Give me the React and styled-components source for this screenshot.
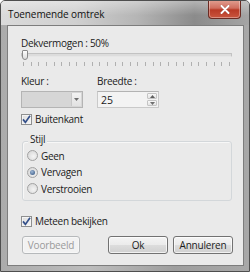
import React from 'react';
import styled, { createGlobalStyle } from 'styled-components';

const Global = createGlobalStyle`
  html, body { margin: 0; padding: 0; background: #ffffff; }
  body { font-family: "Open Sans", "Noto Sans", sans-serif; font-size: 10px; color: #1b1b1b; }
  * { box-sizing: border-box; }
`;

const Window = styled.div`
  width: 250px;
  height: 272px;
  display: flex;
  flex-direction: column;
  border: 1px solid #4e4e4e;
  border-radius: 5px 5px 0 0;
  background: linear-gradient(to right, #ababab 0%, #bdbdbd 35%, #9e9e9e 70%, #a8a8a8 100%);
  overflow: hidden;
`;

const TitleBar = styled.div`
  height: 24px;
  flex: none;
  display: flex;
  align-items: flex-start;
  padding-left: 7px;
  padding-right: 8px;
  background:
    linear-gradient(to bottom, rgba(255,255,255,0.35), rgba(255,255,255,0) 60%),
    linear-gradient(to right, #dadada 0%, #d0d0d0 30%, #b5b5b5 55%, #8b8b8b 78%, #a5a5a5 100%);
`;

const Title = styled.div`
  margin-top: 5px;
  font-size: 10px;
  line-height: 16px;
  color: #111;
  letter-spacing: -0.1px;
`;

const CloseButton = styled.div`
  margin-left: auto;
  margin-top: -1px;
  width: 33px;
  height: 19px;
  border: 1px solid #6b2a22;
  border-top: none;
  border-radius: 0 0 4px 4px;
  background: linear-gradient(to bottom, #e2a193 0%, #d06e5e 45%, #b93a26 55%, #c9553e 100%);
  box-shadow: inset 0 0 0 1px rgba(255,255,255,0.35);
  display: flex;
  align-items: center;
  justify-content: center;
`;

const Client = styled.div`
  flex: 1;
  margin: 0 5px 5px 6px;
  border: 1px solid #7d7d7d;
  background: #eaeaea;
  display: flex;
  flex-direction: column;
  padding: 0 11px 0 13px;
`;

const Label = styled.div`
  font-size: 10px;
  letter-spacing: -0.3px;
  line-height: 16px;
  margin-top: ${p => p.$mt || 0}px;
  white-space: nowrap;
`;

const Slider = styled.div`
  margin-top: -2px;
  height: 18px;
  display: flex;
  flex-direction: column;
  position: relative;
`;

const Track = styled.div`
  margin-top: 4px;
  height: 4px;
  border: 1px solid #c2c2c2;
  border-bottom-color: #e6e6e6;
  background: #dcdcdc;
  border-radius: 1px;
`;

const Thumb = styled.div`
  position: absolute;
  left: 1px;
  top: 1px;
  width: 6px;
  height: 10px;
  border: 1px solid #8a8a8a;
  border-radius: 1px 1px 3px 3px;
  background: linear-gradient(to bottom, #fdfdfd, #dcdcdc);
`;

const Ticks = styled.div`
  margin-top: 5px;
  padding: 0 2px;
  display: flex;
  justify-content: space-between;
`;

const Tick = styled.div`
  width: 1px;
  height: 4px;
  background: #b0b0b0;
`;

const FieldGrid = styled.div`
  display: grid;
  grid-template-columns: 62px 62px;
  column-gap: 14px;
  row-gap: 2px;
  margin-top: ${p => p.$mt || 0}px;
`;

const Combo = styled.div`
  height: 17px;
  border: 1px solid #b4b4b4;
  background: #d6d6d6;
  display: flex;
  justify-content: flex-end;
  padding: 1px;
`;

const ComboArrow = styled.div`
  width: 10px;
  background: linear-gradient(to bottom, #f2f2f2, #e2e2e2);
  border-left: 1px solid #c8c8c8;
  display: flex;
  align-items: center;
  justify-content: center;
`;

const Spin = styled.div`
  height: 17px;
  border: 1px solid #c9c9c9;
  border-top-color: #b3b3b3;
  background: #f3f3f3;
  display: flex;
  align-items: center;
  padding: 1px 1px 1px 3px;
`;

const SpinText = styled.div`
  flex: 1;
  font-size: 10.5px;
  line-height: 14px;
`;

const SpinButtons = styled.div`
  width: 10px;
  align-self: stretch;
  display: flex;
  flex-direction: column;
  gap: 1px;
`;

const SpinButton = styled.div`
  flex: 1;
  border: 1px solid #c4c4c4;
  border-radius: 1px;
  background: linear-gradient(to bottom, #f8f8f8, #e4e4e4);
  display: flex;
  align-items: center;
  justify-content: center;
`;

const Check = styled.div`
  display: flex;
  align-items: center;
  gap: 3px;
  height: 14px;
  margin-top: ${p => p.$mt || 0}px;
`;

const Box = styled.div`
  width: 11px;
  height: 11px;
  border: 1px solid #8e8f8f;
  background: linear-gradient(135deg, #dcdcdc, #f6f6f6);
  box-shadow: inset 0 0 0 1px #f4f4f4;
  display: flex;
  align-items: center;
  justify-content: center;
`;

const Group = styled.div`
  position: relative;
  margin: ${p => p.$mt || 0}px 0 0 1px;
  height: 60px;
  border: 1px solid #d3d7da;
  border-radius: 3px;
  box-shadow: inset 1px 1px 0 #f7f7f7;
  padding: 5.5px 0 0 4px;
  display: flex;
  flex-direction: column;
  gap: 0.5px;
`;

const Legend = styled.div`
  position: absolute;
  left: 5px;
  top: -11px;
  padding: 0 2px;
  background: #eaeaea;
  font-size: 10px;
  letter-spacing: -0.3px;
  line-height: 16px;
`;

const Radio = styled.div`
  display: flex;
  align-items: center;
  gap: 3px;
  height: 16px;
`;

const Circle = styled.div`
  width: 11px;
  height: 11px;
  border-radius: 50%;
  border: 1px solid #a2a2a2;
  background: radial-gradient(circle at 60% 60%, #f4f4f4, #d2d2d2);
  display: flex;
  align-items: center;
  justify-content: center;
`;

const Dot = styled.div`
  width: 5px;
  height: 5px;
  border-radius: 50%;
  background: radial-gradient(circle at 40% 35%, #9fb8d6, #2d4e7a);
`;

const ButtonRow = styled.div`
  display: flex;
  margin-top: ${p => p.$mt || 0}px;
  padding-left: 1px;
  margin-right: -1px;
  gap: 5px;
`;

const Button = styled.div`
  width: ${p => p.$w}px;
  height: 18px;
  margin-left: ${p => (p.$push ? 'auto' : '0')};
  border: 1px solid ${p => (p.$disabled ? '#b6b9bb' : '#727272')};
  border-radius: 3px;
  background: ${p => p.$disabled
    ? '#f2f2f2'
    : 'linear-gradient(to bottom, #f4f4f4 0%, #ebebeb 48%, #dcdcdc 52%, #d0d0d0 100%)'};
  box-shadow: inset 0 0 0 1px ${p => (p.$disabled ? '#f7f7f7' : 'rgba(255,255,255,0.7)')};
  color: ${p => (p.$disabled ? '#9a9a9a' : '#1b1b1b')};
  font-size: 10px;
  letter-spacing: -0.2px;
  line-height: 16px;
  display: flex;
  align-items: center;
  justify-content: center;
`;

const CheckMark = () => (
  <svg width="9" height="9" viewBox="0 0 9 9">
    <path d="M1 4.4 L3.4 7.4 L8 0.8" fill="none" stroke="#34508a" strokeWidth="1.7" />
  </svg>
);

const DownTri = () => (
  <svg width="5" height="3" viewBox="0 0 5 3"><path d="M0 0 H5 L2.5 3 Z" fill="#6e6e6e" /></svg>
);
const UpTri = () => (
  <svg width="5" height="3" viewBox="0 0 5 3"><path d="M0 3 H5 L2.5 0 Z" fill="#5e5e5e" /></svg>
);

export default function App() {
  const ticks = Array.from({ length: 28 });
  return (
    <>
      <Global />
      <Window>
        <TitleBar>
          <Title>Toenemende omtrek</Title>
          <CloseButton>
            <svg width="10" height="9" viewBox="0 0 10 9">
              <path d="M1.5 1 L8.5 8 M8.5 1 L1.5 8" stroke="#5a1a12" strokeWidth="2.6" strokeLinecap="round" opacity="0.35" />
              <path d="M1.5 1 L8.5 8 M8.5 1 L1.5 8" stroke="#ffffff" strokeWidth="2" strokeLinecap="round" />
            </svg>
          </CloseButton>
        </TitleBar>
        <Client>
          <Label $mt={9}>Dekvermogen : 50%</Label>
          <Slider>
            <Track />
            <Thumb />
            <Ticks>
              {ticks.map((_, i) => <Tick key={i} />)}
            </Ticks>
          </Slider>
          <FieldGrid $mt={6}>
            <Label>Kleur :</Label>
            <Label>Breedte :</Label>
            <Combo>
              <ComboArrow><DownTri /></ComboArrow>
            </Combo>
            <Spin>
              <SpinText>25</SpinText>
              <SpinButtons>
                <SpinButton><UpTri /></SpinButton>
                <SpinButton><DownTri /></SpinButton>
              </SpinButtons>
            </Spin>
          </FieldGrid>
          <Check $mt={4}>
            <Box><CheckMark /></Box>
            <Label>Buitenkant</Label>
          </Check>
          <Group $mt={15}>
            <Legend>Stijl</Legend>
            <Radio><Circle /><Label>Geen</Label></Radio>
            <Radio><Circle><Dot /></Circle><Label>Vervagen</Label></Radio>
            <Radio><Circle /><Label>Verstrooien</Label></Radio>
          </Group>
          <Check $mt={13}>
            <Box><CheckMark /></Box>
            <Label>Meteen bekijken</Label>
          </Check>
          <ButtonRow $mt={8}>
            <Button $w={58} $disabled>Voorbeeld</Button>
            <Button $w={60} $push>Ok</Button>
            <Button $w={60}>Annuleren</Button>
          </ButtonRow>
        </Client>
      </Window>
    </>
  );
}
